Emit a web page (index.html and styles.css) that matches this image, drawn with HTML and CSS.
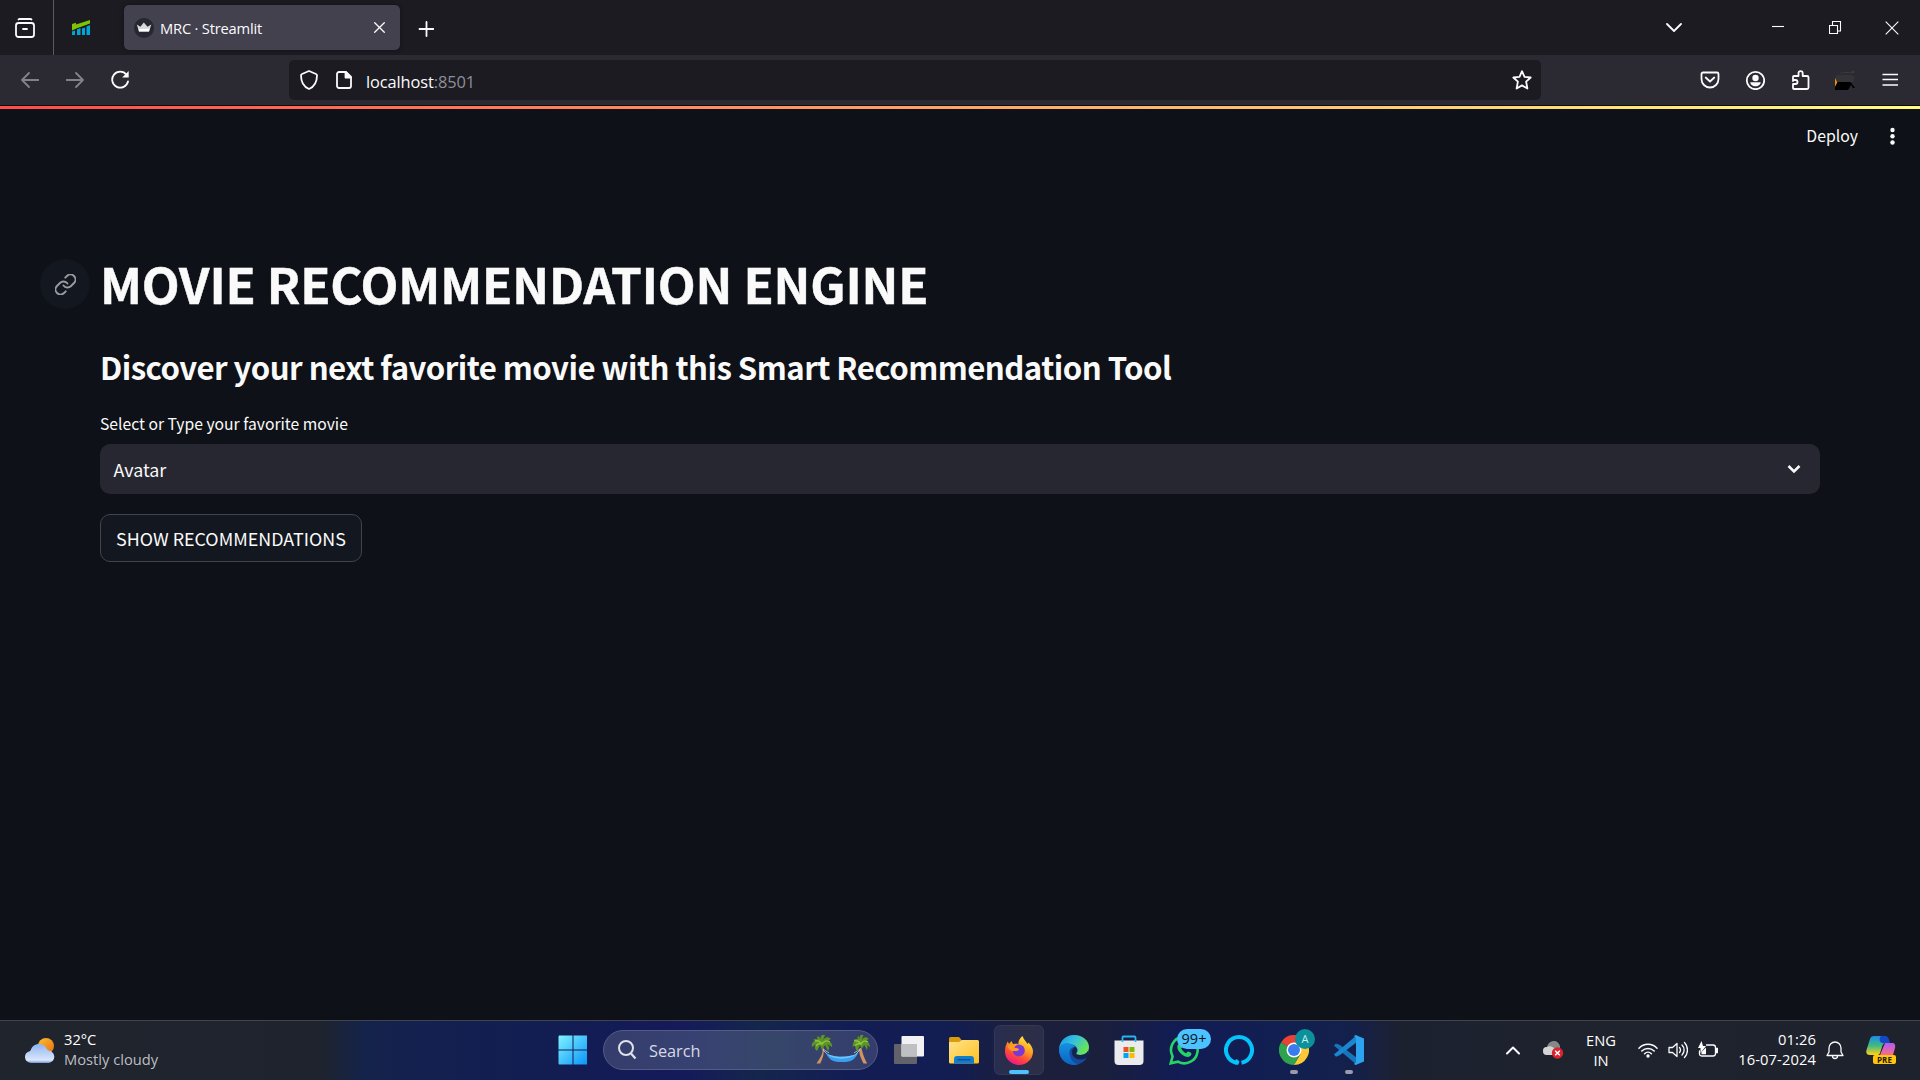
FILE: index.html
```html
<!DOCTYPE html>
<html lang="en">
<head>
<meta charset="utf-8">
<title>MRC · Streamlit</title>
<link rel="stylesheet" href="styles.css">
</head>
<body>
<div class="screen">
  <header class="tabbar">
    <div class="tabbar-view"><svg width="20" height="20" viewBox="0 0 20 20" class="line thick"><path d="M4 1.200h12M3.500 1.500C3.800 1 4.300 1 5 1h10c.7 0 1.200 0 1.500.5"/><rect x="1" y="5" width="18" height="14" rx="2.500"/><path d="M8 11h4"/></svg></div>
    <div class="tabbar-pinned"><svg width="18" height="15" viewBox="0 0 18 15"><path fill="#00a4d6" d="M0 11.500L3 10.500V15H0zM5 9.500l3.500-1.500v7H5zM10 8.500l3-1V15h-3zM14.500 6.500l3.500-1.500v10h-3.500z"/><path fill="#7fc400" d="M0 4l4-1.300v1.800L18 0v3.500L5 8.300 0 10.500z"/></svg></div>
    <div class="tab">
      <svg class="tab-favicon" width="20" height="20" viewBox="0 0 20 20"><circle cx="10" cy="10" r="10" fill="#262730"/><path fill="#d8d8da" d="M2.800 6.500l3.600 2.300L9.800 4.500l3.700 4.300 3.800-2.300-2.200 7H5z"/><path fill="#fff" d="M4.600 11l11-.2-.7 2.700H5z"/></svg>
      <span class="tab-title">MRC · Streamlit</span>
      <svg class="tab-close line" width="11" height="11" viewBox="0 0 11 11"><path d="M.7.7l9.600 9.600M10.300.7L.7 10.300"/></svg>
    </div>
    <svg class="tab-new line thick" width="16" height="16" viewBox="0 0 16 16"><path d="M8.500 1v14M1.500 8h14"/></svg>
    <div class="window-controls">
      <svg class="line thick" width="16" height="10" viewBox="0 0 16 10"><path d="M1 1l7 7 7-7"/></svg>
      <svg class="line sharp ctl-min" width="12" height="12" viewBox="0 0 12 12"><path d="M0 4.500h12"/></svg>
      <svg class="line sharp ctl-max" width="13" height="14" viewBox="0 0 13 14"><path d="M.5 4.500h8v8h-8zM3.500 4V.5h8v9.500H9"/></svg>
      <svg class="line sharp ctl-close" width="14" height="14" viewBox="0 0 14 14"><path d="M.7.700l12.600 12.600M13.300.700L.700 13.300"/></svg>
    </div>
  </header>

  <nav class="toolbar">
    <div class="nav-buttons">
      <svg class="line thick dim" width="18" height="16" viewBox="0 0 18 16"><path d="M17.500 8H1M8 1L1 8l7 7"/></svg>
      <svg class="line thick dim" width="18" height="16" viewBox="0 0 18 16"><path d="M.5 8H17M10 1l7 7-7 7"/></svg>
      <svg class="line thick" width="20" height="20" viewBox="0 0 20 20"><path d="M17 11.500A8 8 0 1 1 15.500 4.700"/><path d="M17.700 1v6.500h-6.500z" fill="#fbfbfe" stroke="none"/></svg>
    </div>
    <div class="urlbar">
      <svg class="line thick" width="18" height="20" viewBox="0 0 18 20"><path d="M9 1l7 3c.6.300 1 .6 1 1.300C17 12 14 17 9 19 4 17 1 12 1 5.300 1 4.600 1.400 4.300 2 4z"/></svg>
      <svg class="line thick url-page" width="16" height="18" viewBox="0 0 16 18"><path d="M3 1h7l5 5v9a2 2 0 0 1-2 2H3a2 2 0 0 1-2-2V3a2 2 0 0 1 2-2z"/><path d="M9.500 1v5.500H15z" fill="#fbfbfe"/></svg>
      <span class="url-text">localhost<span class="url-port">:8501</span></span>
      <svg class="line thick url-star" width="20" height="20" viewBox="0 0 20 20"><path d="M10 1.200l2.500 5.600 6.200.7-4.600 4.100 1.300 6.900L10 15.400l-5.400 3.100 1.300-6.900L1.300 7.500l6.200-.7z"/></svg>
    </div>
    <div class="toolbar-actions">
      <svg class="line thick" width="20" height="20" viewBox="0 0 20 20"><path d="M3 2.500h14a1.500 1.500 0 0 1 1.500 1.500v5a8.500 8.500 0 0 1-17 0V4A1.500 1.500 0 0 1 3 2.500zM5.700 7.500L10 11.500l4.300-4"/></svg>
      <svg class="line thick" width="20" height="20" viewBox="0 0 20 20"><circle cx="10.500" cy="10.500" r="8.700"/><circle cx="10.500" cy="8" r="3.200" fill="#fbfbfe" stroke="none"/><path d="M5.300 12.300h10.400c0 2.200-2.200 4-5.200 4s-5.200-1.800-5.200-4z" fill="#fbfbfe" stroke="none"/></svg>
      <svg class="line thick" width="20" height="20" viewBox="0 0 20 20"><path d="M3 11V7a1 1 0 0 1 1-1h4.500V3.200a2.100 2.100 0 0 1 4.200 0V6H17a1.500 1.500 0 0 1 1.500 1.500v10A1.500 1.500 0 0 1 17 19H4a1 1 0 0 1-1-1v-4h2.500a2 2 0 0 0 0-4H3"/></svg>
      <svg width="20" height="20" viewBox="0 0 20 20"><path d="M0 8l2-3h15l3 2-2 5H0z" fill="#343338"/><path d="M6 4c0-4 9 1 13-3" stroke="#3b3a3e" fill="none"/><circle cx="18" cy="2" r="1.600" fill="#3b3a3e"/><path d="M0 8v9l2.500-4z" fill="#ff8c00"/><path d="M2.500 12h13l4.500 6h-2l-2-3-3 5H0v-3z" fill="#000"/></svg>
      <svg class="line sharp" width="20" height="20" viewBox="0 0 20 20"><path d="M2.500 4.500H18M2.500 9.500H18M2.500 15H18" stroke-width="1.500"/></svg>
    </div>
  </nav>

  <main class="app">
    <div class="decoration"></div>
    <div class="app-header">
      <span class="deploy">Deploy</span>
      <svg width="6" height="18" viewBox="0 0 6 18" fill="#fafafa"><circle cx="3.500" cy="3" r="2.200"/><circle cx="3.500" cy="9.200" r="2.200"/><circle cx="3.500" cy="15.500" r="2.200"/></svg>
    </div>
    <section class="content">
      <div class="title-row">
        <span class="anchor"><svg width="21" height="21" viewBox="1.500 1.500 21 21"><path d="M10 13a5 5 0 0 0 7.540.54l3-3a5 5 0 0 0-7.070-7.070l-1.720 1.710M14 11a5 5 0 0 0-7.540-.54l-3 3a5 5 0 0 0 7.070 7.070l1.710-1.710"/></svg></span>
        <h1>MOVIE RECOMMENDATION ENGINE</h1>
      </div>
      <h3>Discover your next favorite movie with this Smart Recommendation Tool</h3>
      <label class="field-label">Select or Type your favorite movie</label>
      <div class="select"><span>Avatar</span><svg width="14" height="9" viewBox="0 0 14 9"><path d="M1.500 1L7 6.500 12.500 1"/></svg></div>
      <button class="button">SHOW RECOMMENDATIONS</button>
    </section>
  </main>

  <footer class="taskbar">
    <div class="weather">
      <svg width="30" height="26" viewBox="0 0 30 26"><defs><linearGradient id="sun" x2="1" y2="1"><stop stop-color="#f9c22e"/><stop offset="1" stop-color="#ee6a10"/></linearGradient><linearGradient id="cloud" x2="0" y2="1"><stop stop-color="#8db4f2"/><stop offset=".85" stop-color="#dbe7fb"/><stop offset="1" stop-color="#6f93d4"/></linearGradient></defs><circle cx="21" cy="8" r="8" fill="url(#sun)"/><path d="M6.500 25a6 6 0 0 1-1-12C6.500 8.500 10 6 14 6c4 0 7.500 2.500 8.500 6.500A6.300 6.300 0 0 1 24 25z" fill="url(#cloud)"/><path d="M5 13.200c4-1 6 1 7 2.800M14 15c2-3 5-4 9-2" stroke="#b9d0f7" fill="none"/></svg>
      <div class="weather-text"><span>32°C</span><span class="muted">Mostly cloudy</span></div>
    </div>
    <div class="apps">
      <div class="app-slot start"><svg width="30" height="30" viewBox="0 0 30 30"><defs><linearGradient id="win" x2="1" y2="1"><stop stop-color="#7ff3ff"/><stop offset="1" stop-color="#0a94f8"/></linearGradient></defs><path fill="url(#win)" d="M1 .5h13.500v14H.500v-13zM15.500.500H29v14H15.500zM.500 15.500h14v14H1l-.5-1zM15.500 15.500H29v14H15.500z"/></svg></div>
      <div class="search">
        <svg width="19" height="20" viewBox="0 0 19 20"><circle cx="8" cy="8" r="7" fill="none" stroke="#dfe1ea" stroke-width="2"/><path d="M13 13.500L17.500 18.500" stroke="#dfe1ea" stroke-width="2.200"/></svg>
        <span>Search</span>
        <svg class="palms" width="60" height="30" viewBox="0 0 60 30">
          <path d="M11 13c2 5-2 10-5.500 15.500h3.700C12 23 13.500 18 12.500 13zM49 13c-2 5 1 10 3.500 15.500h3.700C53 23 51.500 18 50.500 13z" fill="#cf9462"/>
          <path d="M12 15l7 7M12 14l6 4M49 15l-7 7M49 14l-6 4" stroke="#c9d2df" stroke-width=".8"/>
          <path d="M15 18c7 5 24 5 32 0-2 5-6 9-13 9h-6c-7 0-11-4-13-9z" fill="#3a9ff0"/><path d="M15 18c7 5 24 5 32 0-6 7-26 8-32 0z" fill="#6ec5fa"/>
          <g fill="#5d9422"><path d="M11 8C9 4 4 3 2 5l3 1C2 6 0 9 1 12l4-3c-2 3-1 6 1 7l3-6 2 5 3-5 3 6c2-3 1-5-1-7l5 3c1-3-2-6-5-6l4-2c-3-3-6-2-8 1l2-5c-4-1-5 2-4 4L7 1C5 3 7 5 11 8z"/><path d="M11 8C9 4 4 3 2 5l3 1C2 6 0 9 1 12l4-3c-2 3-1 6 1 7l3-6 2 4 3-4 3 5c1-3 1-5-1-6l4 3c1-3-2-6-5-6l4-2c-3-3-6-2-8 1l2-5c-4-1-5 2-4 4L7 1C5 3 7 5 11 8z" transform="translate(41 0) scale(.88 1)"/></g>
          <path d="M4 6c3-1 5 0 7 3 2-3 5-4 8-2M5 11c2-3 4-3 6-2M43 6c3-1 5 0 7 3 2-3 4-4 7-2M44 11c2-3 4-3 6-2" stroke="#8cc63e" fill="none" stroke-width="1.400"/>
        </svg>
      </div>
      <div class="app-slot taskview"><svg width="30" height="28" viewBox="0 0 30 28"><rect y="8" width="23" height="20" rx="1" fill="#62636a"/><rect x="7.500" width="22.500" height="20.500" rx="1" fill="#f2f2f4"/><path d="M7.500 8H23v12.500H7.500z" fill="#bfc0c4"/></svg></div>
      <div class="app-slot"><svg width="30" height="30" viewBox="0 0 30 30"><defs><linearGradient id="fold" x2="1" y2="1"><stop stop-color="#ffe38a"/><stop offset="1" stop-color="#ffc020"/></linearGradient></defs><path d="M0 3.500A1.500 1.500 0 0 1 1.500 2H10l3 3.500h15a2 2 0 0 1 2 2V14H0z" fill="#dc9a0c"/><path d="M0 7h10l3-2h15.500A1.500 1.500 0 0 1 30 6.500V27a1.500 1.500 0 0 1-1.500 1.500h-27A1.500 1.500 0 0 1 0 27z" fill="url(#fold)"/><path d="M5 28.500V24a3 3 0 0 1 3-3h14a3 3 0 0 1 3 3v4.500z" fill="#127ccd"/><path d="M8.500 24.700h13" stroke="#0a4f92" stroke-width="1.300"/></svg></div>
      <div class="app-slot active"><svg width="28" height="29" viewBox="0 0 28 29"><defs><linearGradient id="fx" x1=".8" x2=".3" y2="1"><stop stop-color="#fff044"/><stop offset=".4" stop-color="#ffa51f"/><stop offset=".7" stop-color="#ff4b38"/><stop offset="1" stop-color="#f0128d"/></linearGradient></defs><path d="M17.500 0c1 3.500 3.500 5 5 8l1-1.500C27 10 28 13 28 15.500a14 13.500 0 0 1-28 0C0 11 1 8.500 2.800 5.500L4 8l2.500-3L8 8c2-.5 3.500-.5 5.500 0-.5-3 1.500-6 4-8z" fill="url(#fx)"/><circle cx="13.800" cy="14.500" r="6" fill="#7b3ad8"/><path d="M3 10c2-3 6-2.500 9-.5-2 .5-3 1.500-2 2.500 2 0 4 .5 4 1.500-1.500 2-4 1.500-5 1.500-3 0-6-1.500-6-5z" fill="#ff9a22"/></svg><i class="run run-on"></i></div>
      <div class="app-slot"><svg width="30" height="30" viewBox="0 0 30 30"><defs><linearGradient id="ed" x1="0" x2="1" y2=".5"><stop stop-color="#1498e8"/><stop offset=".5" stop-color="#35bfe0"/><stop offset="1" stop-color="#69e457"/></linearGradient><linearGradient id="ed2" x2="0" y2="1"><stop stop-color="#1690e0"/><stop offset="1" stop-color="#0a64c4"/></linearGradient></defs><circle cx="15" cy="15" r="15" fill="#124c9b"/><path d="M0 14C1 5.500 7 0 15 0c9 0 15 6 15 12 0 5-4 8-8.500 8-3 0-4.500-1-4-2 2-2 1.500-6-3-8C9 8 2 8 0 14z" fill="url(#ed)"/><path d="M0 15C0 10 5 7.500 10 8.500c3 .5 5 2 6 3.500-4 0-6 3-5.500 7 .5 5 4 9.500 9 10.200A15 15 0 0 1 0 15z" fill="url(#ed2)"/><path d="M16 12c-3 2-4 5-2 9 2 3 8 5 13 2 1-.5 1.500 0 1.200.500L30 19l-1-3c-2 3-5 4-8 4-3 0-4.500-1-4-2 1.500-1.500 1.500-4-1-6z" fill="#16224f"/></svg></div>
      <div class="app-slot"><svg width="30" height="30" viewBox="0 0 30 30"><path d="M8.500 7V2.500a1 1 0 0 1 1-1h11a1 1 0 0 1 1 1V7" fill="none" stroke="#28b5ee" stroke-width="1.800"/><path d="M.500 5.500h29V26a4 4 0 0 1-4 4h-21a4 4 0 0 1-4-4z" fill="#ebebed"/><path d="M9.500 12h5v5h-5z" fill="#f25022"/><path d="M15.500 12h5v5h-5z" fill="#7fba00"/><path d="M9.500 18h5v5h-5z" fill="#00a4ef"/><path d="M15.500 18h5v5h-5z" fill="#ffb900"/><path d="M8.500 5v2M21.500 5v2" stroke="#28b5ee" stroke-width="1.800"/></svg></div>
      <div class="app-slot"><svg width="30" height="30" viewBox="0 0 30 30"><path d="M1.700 28.300l1.900-7A13.300 13.300 0 1 1 9 26.700z" fill="none" stroke="#25d366" stroke-width="2.600"/><path d="M10 8.500c1-1 2-.6 2.400.300l1 2.500c.3.800-.8 1.700-1.200 2.200 1 2.200 2.800 3.800 5 4.700.7-.6 1.300-1.900 2.200-1.600l2.600 1.200c.9.500.3 2.700-1 3.500-2 1.300-5 .4-7.500-1.300-2.800-2-5.200-5.200-5.200-8 0-1.500.7-2.700 1.700-3.500z" fill="#25d366"/></svg><span class="badge">99+</span></div>
      <div class="app-slot"><svg width="30" height="30" viewBox="0 0 30 30"><path d="M12.500 27.800A13 13 0 1 1 17.500 27.800" fill="none" stroke="#05c3fb" stroke-width="4"/><path d="M12 24c1.500.8 2.500 1 3.500 3l-1.500 3-4-1z" fill="#05c3fb"/></svg></div>
      <div class="app-slot"><svg width="30" height="30" viewBox="0 0 30 30"><path d="M15 15L2 7.500A15 15 0 0 1 28 7.500H15z" fill="#ea4335"/><path d="M15 15L2 7.500A15 15 0 0 0 15 30l6.500-11.500z" fill="#2fa24f"/><path d="M15 7.500h13A15 15 0 0 1 15 30l6.500-11z" fill="#fcc934"/><circle cx="15" cy="15" r="7.500" fill="#fff"/><circle cx="15" cy="15" r="6" fill="#3a7ced"/></svg><span class="avatar">A</span><i class="run"></i></div>
      <div class="app-slot"><svg width="30" height="30" viewBox="0 0 30 30"><path d="M0 10.500l2-2 4 1.500L23 23v7L1 11.500z" fill="#1576bd"/><path d="M0 19.500l2 2.200L6 20 23 7V0L1 18.500z" fill="#1a86cf"/><path d="M21.500 0L30 3.500v23L21.500 30l-1.500-1 2-2V3l-2-2z" fill="#2ba3ee"/></svg><i class="run"></i></div>
    </div>
    <div class="tray">
      <svg class="line" width="14" height="9" viewBox="0 0 14 9"><path d="M1 7.500l6-6 6 6" stroke-width="2"/></svg>
      <svg class="tray-cloud" width="21" height="18" viewBox="0 0 21 18"><path d="M4 14a4 4 0 0 1 0-8c1-4 4-6 7-6 3 0 5 2 6 5v9z" fill="#87888b"/><path d="M4 14a4 4 0 0 1 0-8c3-1.500 6-.5 9 3v5z" fill="#d4d4d6"/><circle cx="14.500" cy="12" r="5.700" fill="#d9232e"/><path d="M12.200 9.700l4.600 4.600M16.800 9.700l-4.600 4.600" stroke="#fff" stroke-width="1.500"/></svg>
      <div class="lang"><span>ENG</span><span>IN</span></div>
      <div class="tray-icons">
        <svg class="line" width="20" height="16" viewBox="0 0 20 16"><path d="M1 6.200a12.500 12.500 0 0 1 18 0M3.800 9a8.700 8.700 0 0 1 12.400 0M6.600 11.700a4.900 4.900 0 0 1 6.800 0" stroke-width="1.500"/><circle cx="10" cy="14" r="1.700" fill="#fff" stroke="none"/></svg>
        <svg class="line" width="20" height="18" viewBox="0 0 20 18"><path d="M1 6.500h3.500L9 2.500v13l-4.500-4H1zM11.500 6.500a4 4 0 0 1 0 5M14 4a7 7 0 0 1 0 10M16.500 1.500a11 11 0 0 1 0 15"/></svg>
        <svg class="line" width="20" height="18" viewBox="0 0 20 18"><path d="M8.500 4h6.500a2.500 2.500 0 0 1 2.500 2.500v6A2.500 2.500 0 0 1 15 15H3.500A2 2 0 0 1 1.500 13V10"/><path d="M18 7.500h1.500v4H18z" fill="#fff"/><path d="M3.500 0L0 7h2.500v5L8 5H5z" fill="#fff" stroke="none"/><path d="M3.500 13.300V11L8 6.500v6.800z" fill="#fff" stroke="none"/></svg>
      </div>
      <div class="clock"><span>01:26</span><span>16-07-2024</span></div>
      <svg class="line bell" width="18" height="19" viewBox="0 0 18 19"><path d="M9 1a6 6 0 0 0-6 6v4L1 14.500h16L15 11V7a6 6 0 0 0-6-6zM6.500 15a2.500 2.500 0 0 0 5 0"/></svg>
      <div class="copilot"><svg width="30" height="28" viewBox="0 0 30 28"><defs><linearGradient id="cp" x2="0" y2="1"><stop stop-color="#1c8be8"/><stop offset=".5" stop-color="#3fb984"/><stop offset="1" stop-color="#ffd21a"/></linearGradient><linearGradient id="cq" x2="0" y2="1"><stop stop-color="#b25cf2"/><stop offset="1" stop-color="#fb6b86"/></linearGradient></defs><path d="M8 0h10c3 0 4 3 5 6-5 0-6 2-7 5l-2 6c-.6 1.500-1.500 2-3 2H4c-3 0-4.500-2-3.500-5L4 3c.6-2 2-3 4-3z" fill="url(#cp)"/><path d="M15 0h4c3 0 4 3 5 7h-8c-3-1-3-5-1-7z" fill="#1747c9"/><path d="M19 7h7c3 0 3.500 2 3 5l-2 7H14z" fill="url(#cq)"/></svg><span class="pre">PRE</span></div>
    </div>
  </footer>
</div>
</body>
</html>
```
FILE: styles.css
```css
* { box-sizing: border-box; }

body {
  margin: 0;
  background: #0e1117;
  color: #fbfbfe;
  font-family: "Open Sans", "Noto Sans", sans-serif;
}

svg { display: block; flex: none; }

.screen {
  width: 1920px;
  height: 1080px;
  display: flex;
  flex-direction: column;
  overflow: hidden;
}

.line { fill: none; stroke: #fbfbfe; stroke-width: 1.3; stroke-linecap: round; stroke-linejoin: round; }
.thick { stroke-width: 1.8; }
.sharp { stroke-width: 1.1; stroke-linecap: butt; stroke-linejoin: miter; }
.dim { opacity: .42; }

/* Browser tab strip */
.tabbar {
  height: 55px;
  flex: none;
  display: flex;
  align-items: center;
  background: #1c1b22;
}
.tabbar-view {
  width: 54px;
  height: 55px;
  display: flex;
  align-items: center;
  padding: 1px 0 0 15px;
  border-right: 1px solid #5b5a62;
}
.tabbar-pinned { width: 70px; padding-left: 18px; }
.tab {
  width: 276px;
  height: 45px;
  display: flex;
  align-items: center;
  padding: 0 15px 0 10px;
  border-radius: 5px;
  background: #42414d;
  box-shadow: 0 0 4px rgba(0, 0, 0, .4);
}
.tab-title { margin: 0 0 0 6px; font-size: 14.7px; letter-spacing: -.2px; }
.tab-close { margin-left: auto; }
.tab-new { margin: 2px 0 0 18px; }
.window-controls { margin-left: auto; display: flex; align-items: center; padding-right: 21px; }
.ctl-min { margin-left: 90px; }
.ctl-max { margin-left: 45px; }
.ctl-close { margin-left: 43px; }

/* Navigation toolbar */
.toolbar {
  height: 50px;
  flex: none;
  display: flex;
  align-items: center;
  padding: 0 20px 0 21px;
  background: #2b2a33;
}
.nav-buttons { display: flex; align-items: center; gap: 27px; width: 268px; }
.urlbar {
  width: 1252px;
  height: 40px;
  display: flex;
  align-items: center;
  padding: 0 9px 0 11px;
  border-radius: 5px;
  background: #1c1b22;
}
.url-page { margin-left: 18px; }
.url-text { margin: 2px 0 0 14px; font-size: 16.4px; letter-spacing: -.1px; }
.url-port { color: #8f8f98; }
.url-star { margin-left: auto; }
.toolbar-actions { margin-left: auto; display: flex; gap: 25px; }

/* Streamlit page */
.app {
  flex: 1;
  display: flex;
  flex-direction: column;
  border-top: 1px solid #0c0c0f;
  background: #0e1117;
  color: #fafafa;
  font-family: "Noto Sans CJK SC", "Noto Sans", sans-serif;
}
.decoration { height: 3px; background: linear-gradient(90deg, #ff4b4b, #fffd80); }
.app-header {
  height: 54px;
  display: flex;
  align-items: center;
  justify-content: flex-end;
  gap: 31px;
  padding-right: 25px;
}
.deploy { margin-bottom: 2px; font-size: 15.8px; }
.content { display: flex; flex-direction: column; align-items: flex-start; padding: 96px 100px 0; }
.title-row { display: flex; align-items: flex-start; height: 50px; margin-left: -60px; gap: 10px; }
.anchor {
  width: 50px;
  height: 50px;
  display: grid;
  place-items: center;
  border-radius: 50%;
  background: #13171f;
}
.anchor path { fill: none; stroke: #9b9ca0; stroke-width: 1.9; stroke-linecap: round; stroke-linejoin: round; }
h1, h3 { margin: 0; white-space: nowrap; font-weight: 700; }
h1 { font-size: 49.2px; line-height: 48px; letter-spacing: -.1px; -webkit-text-stroke: .5px #fafafa; }
h3 { margin-top: 37px; font-size: 31.2px; line-height: 42px; letter-spacing: -.54px; }
.field-label { margin-top: 23px; height: 26px; font-size: 15.7px; line-height: 26px; }
.select {
  width: 1720px;
  height: 50px;
  display: flex;
  align-items: center;
  justify-content: space-between;
  margin-top: 7px;
  padding: 0 19px 0 13.500px;
  border-radius: 10px;
  background: #262730;
  font-size: 17.9px;
}
.select path { fill: none; stroke: #fafafa; stroke-width: 2.5; }
.button {
  width: 262px;
  height: 48px;
  margin-top: 20px;
  padding: 0;
  border: 1px solid #41444a;
  border-radius: 10px;
  background: #13171f;
  color: #fafafa;
  font-family: inherit;
  font-size: 17.9px;
  white-space: nowrap;
}

/* Windows taskbar */
.taskbar {
  height: 60px;
  flex: none;
  display: flex;
  align-items: center;
  border-top: 1px solid #41444c;
  padding-bottom: 1px;
  background: linear-gradient(90deg, #1f242d 0, #1e232d 320px, #14234b 365px, #14204f 420px, #121d52 560px, #151a5a 680px, #14264c 760px, #131d55 850px, #121d52 950px, #1c1f3b 1020px, #1a1f3c 1100px, #121c55 1180px, #122050 1300px, #14204c 1350px, #1c2130 1400px, #1e232d 1600px, #1e222c 100%);
  color: #fff;
  font-size: 14.7px;
  line-height: 20px;
}
.weather { width: 548px; display: flex; align-items: center; gap: 9px; padding-left: 25px; }
.weather svg { margin-top: 2px; }
.weather-text { display: flex; flex-direction: column; margin-top: -3px; }
.muted { color: #bcbec2; }
.apps { display: flex; align-items: center; }
.app-slot {
  position: relative;
  width: 50px;
  height: 50px;
  margin-right: 5px;
  display: grid;
  place-items: center;
}
.start { margin-right: 5px; }
.taskview { margin-left: 6px; }
.active { border-radius: 6px; background: rgba(255, 255, 255, .07); box-shadow: inset 0 0 0 1px rgba(255, 255, 255, .05); }
.search {
  width: 275px;
  height: 40px;
  display: flex;
  align-items: center;
  padding: 0 6px 0 14px;
  border: 1px solid #555b86;
  border-radius: 20px;
  background: linear-gradient(90deg, #343d6c, #384272 35%, #36466a 60%, #343d6c);
  color: #d7d9e4;
  font-size: 16.3px;
}
.search span { margin: 2px 0 0 12px; }
.palms { margin-left: auto; }
.run {
  position: absolute;
  left: 21px;
  bottom: 1px;
  width: 8px;
  height: 4px;
  border-radius: 2px;
  background: #9a9ba8;
}
.run-on { left: 15px; width: 20px; background: #4cc2ff; }
.badge {
  position: absolute;
  left: 18px;
  top: 4px;
  width: 34px;
  height: 20px;
  border-radius: 10px;
  background: #4cc2ff;
  color: #0a1420;
  font-size: 14.5px;
  line-height: 19px;
  text-align: center;
}
.avatar {
  position: absolute;
  left: 26px;
  top: 4px;
  width: 20px;
  height: 20px;
  border-radius: 50%;
  background: #0b909c;
  color: #c9edf0;
  font-size: 11px;
  text-align: center;
}
.tray { margin-left: auto; display: flex; align-items: center; padding-right: 24px; }
.tray-cloud { margin-left: 23px; }
.lang { width: 40px; margin-left: 17px; display: flex; flex-direction: column; text-align: center; }
.tray-icons { display: flex; align-items: center; gap: 10px; margin-left: 17px; }
.clock { width: 98px; display: flex; flex-direction: column; margin-top: -2px; text-align: right; letter-spacing: .12px; }
.bell { margin-left: 10px; }
.copilot { position: relative; margin-left: 22px; }
.pre {
  position: absolute;
  left: 7px;
  top: 19px;
  width: 23px;
  height: 9px;
  border-radius: 2px;
  background: #ffc60a;
  color: #1d1a10;
  font-size: 8px;
  font-weight: 700;
  line-height: 9px;
  text-align: center;
}
```
